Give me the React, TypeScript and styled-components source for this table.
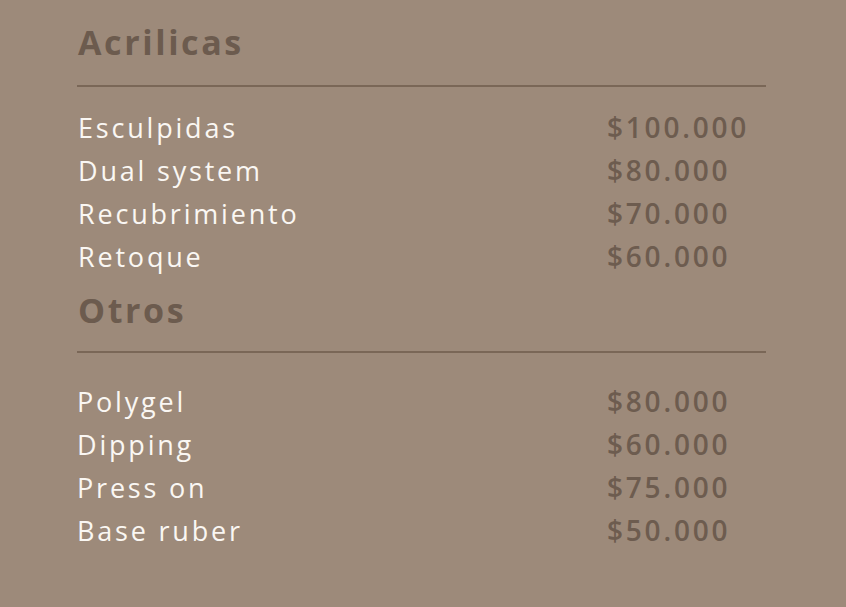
import styled, { createGlobalStyle } from "styled-components";

const GlobalStyle = createGlobalStyle`
  html, body {
    margin: 0;
    padding: 0;
    background-color: #9d8a7a;
  }
  body {
    font-family: "Open Sans", "Noto Sans", sans-serif;
  }
`;

const Page = styled.div`
  width: 846px;
  height: 607px;
  box-sizing: border-box;
  padding: 22px 80px 0 77px;
  background-color: #9d8a7a;
  overflow: hidden;
`;

interface SectionProps {
  $gap: number;
}

const Section = styled.section<SectionProps>`
  display: flex;
  flex-direction: column;
  margin-top: ${(props) => props.$gap}px;
`;

const Heading = styled.h2`
  margin: 0 0 0 1px;
  font-size: 34px;
  line-height: 40px;
  font-weight: 700;
  letter-spacing: 2.6px;
  color: #6c5b4e;
`;

interface RuleProps {
  $top: number;
  $bottom: number;
}

const Rule = styled.div<RuleProps>`
  height: 2px;
  background-color: #7a6757;
  margin-top: ${(props) => props.$top}px;
  margin-bottom: ${(props) => props.$bottom}px;
`;

const Row = styled.div`
  display: grid;
  grid-template-columns: 530px 1fr;
  align-items: baseline;
  height: 43px;
  line-height: 43px;
`;

interface NameProps {
  $indent?: number;
}

const Name = styled.span<NameProps>`
  font-size: 27px;
  letter-spacing: 2.8px;
  color: #faf7f3;
  padding-left: ${(props) => props.$indent ?? 1}px;
`;

const Price = styled.span`
  font-size: 28px;
  font-weight: 600;
  letter-spacing: 2.8px;
  color: #6d5c4f;
`;

type Item = { name: string; price: string };

const acrilicas: Item[] = [
  { name: "Esculpidas", price: "$100.000" },
  { name: "Dual system", price: "$80.000" },
  { name: "Recubrimiento", price: "$70.000" },
  { name: "Retoque", price: "$60.000" },
];

const otros: Item[] = [
  { name: "Polygel", price: "$80.000" },
  { name: "Dipping", price: "$60.000" },
  { name: "Press on", price: "$75.000" },
  { name: "Base ruber", price: "$50.000" },
];

const App = () => {
  return (
    <>
      <GlobalStyle />
      <Page>
        <Section $gap={0}>
          <Heading>Acrilicas</Heading>
          <Rule $top={23} $bottom={19} />
          {acrilicas.map((item) => (
            <Row key={item.name}>
              <Name>{item.name}</Name>
              <Price>{item.price}</Price>
            </Row>
          ))}
        </Section>
        <Section $gap={12}>
          <Heading>Otros</Heading>
          <Rule $top={21} $bottom={27} />
          {otros.map((item) => (
            <Row key={item.name}>
              <Name $indent={-1}>{item.name}</Name>
              <Price>{item.price}</Price>
            </Row>
          ))}
        </Section>
      </Page>
    </>
  );
};

export default App;
